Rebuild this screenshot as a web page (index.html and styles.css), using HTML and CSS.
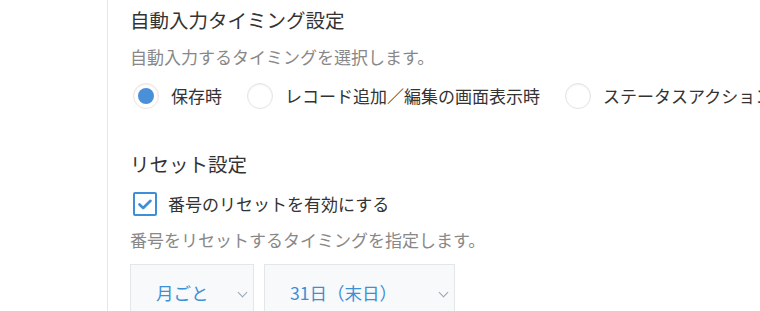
FILE: index.html
```html
<!DOCTYPE html>
<html lang="ja">
<head>
    <meta charset="UTF-8">
    <title>設定</title>
    <link rel="stylesheet" href="styles.css">
</head>
<body>
<div class="page">
    <div class="side"></div>
    <div class="main">

        <h2 class="title">自動入力タイミング設定</h2>
        <p class="desc">自動入力するタイミングを選択します。</p>
        <div class="radios">
            <label class="radio checked"><span class="circle"></span>保存時</label>
            <label class="radio"><span class="circle"></span>レコード追加／編集の画面表示時</label>
            <label class="radio"><span class="circle"></span>ステータスアクション実行時</label>
        </div>

        <h2 class="title title-reset">リセット設定</h2>
        <label class="check">
            <span class="box">
                <svg width="14" height="11" viewBox="0 0 14 11"><path d="M1.5 5.5 L5.2 9 L12.5 1.8" fill="none" stroke="#3d8fd6" stroke-width="2.6" stroke-linecap="round" stroke-linejoin="round"/></svg>
            </span>
            番号のリセットを有効にする
        </label>
        <p class="desc desc-reset">番号をリセットするタイミングを指定します。</p>

        <div class="selects">
            <div class="select select-short">月ごと<span class="arrow"></span></div>
            <div class="select select-long">31日（末日）<span class="arrow"></span></div>
        </div>

    </div>
</div>
</body>
</html>
```
FILE: styles.css
```css
body {
    margin: 0;
    font-family: "Noto Sans CJK JP", "Noto Sans", sans-serif;
    color: #333;
    background-color: #fff;
    overflow: hidden;
}
.page {
    display: flex;
    height: 311px;
}
.side {
    width: 107px;
    flex-shrink: 0;
    border-right: 1px solid #e3e7e8;
}
.main {
    flex: 1;
    min-width: 0;
    overflow: hidden;
    padding-left: 22px;
    padding-top: 8px;
    white-space: nowrap;
}
.title {
    margin: 0;
    font-size: 19.5px;
    font-weight: normal;
    line-height: 24px;
}
.title-reset {
    margin-top: 43px;
}
.desc {
    margin: 13px 0 0;
    font-size: 17px;
    line-height: 24px;
    color: #888;
}
.desc-reset {
    margin-top: 12px;
}
.radios {
    display: flex;
    margin-top: 14px;
    padding-left: 3px;
}
.radio {
    display: flex;
    align-items: center;
    flex-shrink: 0;
    margin-right: 25px;
    font-size: 17px;
    line-height: 26px;
}
.circle {
    width: 24px;
    height: 24px;
    border: 1px solid #e3e3e3;
    border-radius: 50%;
    margin-right: 12px;
    background-color: #fff;
    box-shadow: inset 0 1px 2px rgba(0, 0, 0, 0.06);
    display: flex;
    align-items: center;
    justify-content: center;
}
.radio.checked .circle {
    border-color: #f0e2de;
}
.radio.checked .circle::after {
    content: "";
    width: 16px;
    height: 16px;
    border-radius: 50%;
    background-color: #4a90d9;
}
.check {
    display: flex;
    align-items: center;
    margin-top: 16px;
    padding-left: 3px;
    font-size: 17px;
    line-height: 24px;
}
.box {
    width: 20px;
    height: 20px;
    border: 2px solid #3d8fd6;
    border-radius: 2px;
    margin-right: 11px;
    display: flex;
    align-items: center;
    justify-content: center;
}
.selects {
    display: flex;
    gap: 10px;
    margin-top: 12px;
}
.select {
    position: relative;
    height: 58px;
    line-height: 56px;
    padding-left: 25px;
    background-color: #f7f9fa;
    border: 1px solid #e3e7e8;
    font-size: 17.5px;
    color: #3d8fd6;
    box-sizing: border-box;
}
.select-short {
    width: 124px;
}
.select-long {
    width: 191px;
}
.arrow {
    position: absolute;
    right: 7px;
    top: 24px;
    width: 6px;
    height: 6px;
    border-right: 1px solid #9aa6b2;
    border-bottom: 1px solid #9aa6b2;
    transform: rotate(45deg);
}
```
